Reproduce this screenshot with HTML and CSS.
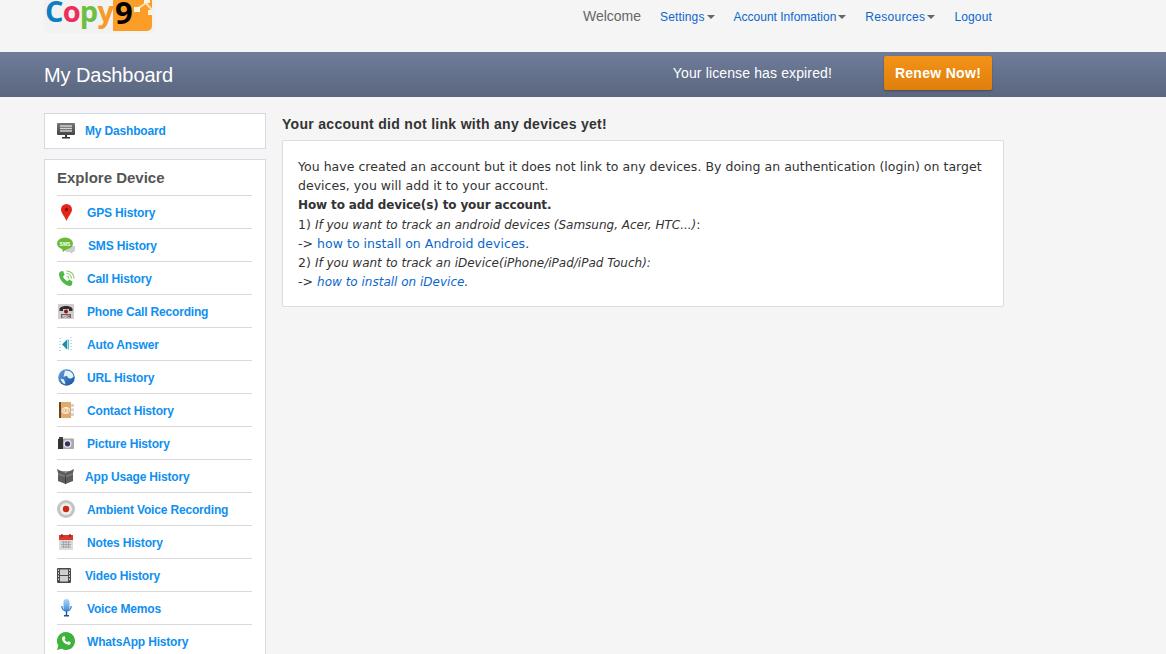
FILE: index.html
```html
<!DOCTYPE html>
<html lang="en">
<head>
<meta charset="utf-8">
<title>My Dashboard</title>
<link rel="stylesheet" href="styles.css">
</head>
<body>
<div class="page">
<header class="topbar">
  <div class="logo"><span class="word"><span class="lc">C</span><span class="lo">o</span><span class="lp">p</span><span class="ly">y</span></span><span class="nine"><svg class="nine-art" viewBox="0 0 39 31" width="39" height="31"><path d="M0 0h39v26a5 5 0 0 1-5 5H0z" fill="#fb9d27"/><path d="M24 9l9-6 6 7" fill="none" stroke="#fbe6c8" stroke-width="2"/><rect x="21" y="7" width="6" height="5" fill="#fdf3e3"/><rect x="35" y="10" width="4" height="5" fill="#f8f3ea"/><rect x="31" y="0" width="6" height="3" fill="#fdf3e3"/></svg>9</span></div>
  <nav class="nav">
    <span class="welcome">Welcome</span>
    <a class="nav-link caret">Settings</a>
    <a class="nav-link caret nav-tight">Account Infomation</a>
    <a class="nav-link caret nav-wide">Resources</a>
    <a class="nav-link">Logout</a>
  </nav>
</header>
<section class="banner">
  <h1 class="banner-title">My Dashboard</h1>
  <span class="license">Your license has expired!</span>
  <a class="renew">Renew Now!</a>
</section>
<main class="main">
  <aside class="side">
    <div class="card dash-card">
      <svg class="ic" viewBox="0 0 18 16" width="18" height="16"><defs><linearGradient id="mon" x1="0" y1="0" x2="0" y2="1"><stop offset="0" stop-color="#777"/><stop offset="1" stop-color="#444"/></linearGradient></defs><rect x="0" y="0" width="18" height="12" rx="1" fill="url(#mon)"/><path d="M3 3h12M3 5.500h12M3 8h12" stroke="#d4d4d4" stroke-width="1.500"/><path d="M8 12h2v2H8zM5 14h8v1.500H5z" fill="#333"/></svg>
      <a class="side-link dash-link">My Dashboard</a>
    </div>
    <div class="card explore">
      <h2 class="explore-title">Explore Device</h2>
      <ul class="menu">
        <li class="row"><span class="slot p4 w30"><svg viewBox="0 0 11 17" width="11" height="17"><path d="M5.500 0A5.500 5.500 0 0 0 0 5.500C0 9 3.500 12 5.500 17 7.500 12 11 9 11 5.500A5.500 5.500 0 0 0 5.500 0z" fill="#e3261a"/><circle cx="5.500" cy="5.500" r="1.800" fill="#8c140c"/></svg></span><a class="side-link">GPS History</a></li>
        <li class="row"><span class="slot p0 w31"><svg viewBox="0 0 18 17" width="18" height="17"><path d="M8 9h10v4l-1 2h-2l1 2-4-2H9z" fill="#cfcfcf"/><ellipse cx="8" cy="6.500" rx="8" ry="6" fill="#69bb35"/><path d="M5 11l1 4 4-3z" fill="#69bb35"/><text x="8" y="8.500" class="sms-text">SMS</text></svg></span><a class="side-link">SMS History</a></li>
        <li class="row"><span class="slot p1 w30"><svg viewBox="0 0 17 17" width="17" height="17"><path d="M2.500 1.500 5 1l1.700 3.800L5 6.500c.8 2 2.300 3.600 4.500 4.700l1.700-1.700 3.300 2-.5 3c-.5 1-1.500 1.700-2.500 1.500C6 15 1.500 10 1 4.500 1 3 1.500 2 2.500 1.500z" fill="#4fb948"/><path d="M8.500 6a2.800 2.800 0 0 1 2.500 2.500M8.500 3.500a5.300 5.300 0 0 1 5 5M8.500 1a7.800 7.800 0 0 1 7.700 7.500" fill="none" stroke="#7ccb62" stroke-width="1.100"/></svg></span><a class="side-link">Call History</a></li>
        <li class="row"><span class="slot p1 w30"><svg viewBox="0 0 16 15" width="16" height="15"><rect width="16" height="15" fill="#d2cccc"/><path d="M1.500 5C2 1 14 1 14.500 5V7H11V5H5V7H1.500z" fill="#2e2e2e"/><circle cx="8" cy="7.500" r="2" fill="#8c1a1a"/><rect x="3" y="10" width="10" height="4" fill="#6d6060"/><text x="8" y="13.500" class="rec-text">REC</text></svg></span><a class="side-link">Phone Call Recording</a></li>
        <li class="row"><span class="slot p2 w30"><svg viewBox="0 0 13 15" width="13" height="15"><path d="M0 1h2v1H0zM0 4h2v1H0zM0 7h2v1H0zM0 10h2v1H0zM0 13h2v1H0zM11 0h2v1h-2zM11 3h2v1h-2zM11 6h2v1h-2zM11 9h2v1h-2zM11 12h2v1h-2z" fill="#b5e0e8"/><path d="M3 7.500 8 2.500v10z" fill="#1f8fa8"/><path d="M8.500 2.500h1.500v10H8.500z" fill="#68bccd"/></svg></span><a class="side-link">Auto Answer</a></li>
        <li class="row"><span class="slot p1 w30"><svg viewBox="0 0 17 17" width="17" height="17"><defs><linearGradient id="globe" x1="0" y1="0" x2="1" y2="1"><stop offset="0" stop-color="#5fa5e0"/><stop offset="1" stop-color="#154d9a"/></linearGradient></defs><circle cx="8.500" cy="8.500" r="8.300" fill="url(#globe)"/><path d="M7 1.500c3 .5 4 0 6 1.500 2 1.500 2.500 3.500 2.500 5l-3 1.800-2.500-1-1-2-3.500 1zM2.500 9.500l3.500 1 1.500 4.500c-2.500 0-4.500-3-5-5.500z" fill="#e6f2fa"/></svg></span><a class="side-link">URL History</a></li>
        <li class="row"><span class="slot p2 w30"><svg viewBox="0 0 15 16" width="15" height="16"><rect x="0" y="0" width="12" height="16" fill="#dfaa6d"/><rect x="0" y="0" width="2" height="16" fill="#6f4219"/><path d="M12 2h3v3h-3zM12 6.500h3v3h-3zM12 11h3v3h-3z" fill="#d5d5d5"/><text x="7" y="11" class="at-text">@</text></svg></span><a class="side-link">Contact History</a></li>
        <li class="row"><span class="slot p1 w30"><svg viewBox="0 0 16 12" width="16" height="12"><rect y="1.500" width="16" height="10.500" rx="1" fill="#a9a9a9"/><rect x="1" y="0" width="4" height="3" fill="#444"/><rect y="2" width="5" height="10" fill="#333"/><circle cx="9.500" cy="6.800" r="4" fill="#e4e4e4"/><circle cx="9.500" cy="6.800" r="2.600" fill="#33306a"/></svg></span><a class="side-link">Picture History</a></li>
        <li class="row"><span class="slot p0 w28"><svg viewBox="0 0 17 16" width="17" height="16"><path d="M0 1l4 2h9l4-2-1 4v8l-7.500 3L1 13V5z" fill="#5d5d5d"/><path d="M1 1.500 8.500 5 16 1.500 13 3H4z" fill="#999"/><path d="M1 5l7.500 3L16 5v1.500l-7.500 3L1 6.500z" fill="#808080"/><path d="M8.500 8v8" stroke="#3c3c3c"/></svg></span><a class="side-link">App Usage History</a></li>
        <li class="row"><span class="slot p0 w30"><svg viewBox="0 0 18 18" width="18" height="18"><circle cx="9" cy="9" r="9" fill="#c4c4c4"/><circle cx="9" cy="9" r="6" fill="#f0eeee"/><circle cx="9" cy="9" r="3.200" fill="#cd2a12"/></svg></span><a class="side-link">Ambient Voice Recording</a></li>
        <li class="row"><span class="slot p2 w30"><svg viewBox="0 0 14 16" width="14" height="16"><rect y="1" width="14" height="15" fill="#dcdcdc"/><rect y="1" width="14" height="5" fill="#d9392c"/><path d="M3 0v3M11 0v3" stroke="#7d1c14" stroke-width="1.200"/><path d="M2 8h10M2 10.500h10M2 13h10M4.500 7v7M7 7v7M9.500 7v7" stroke="#a5a5a5"/></svg></span><a class="side-link">Notes History</a></li>
        <li class="row"><span class="slot p0 w28"><svg viewBox="0 0 14 15" width="14" height="15"><rect width="14" height="15" rx="1" fill="#4a4a4a"/><path d="M1 1.500h1v1.500H1zM1 4.500h1V6H1zM1 7.500h1V9H1zM1 10.500h1V12H1zM12 1.500h1v1.500h-1zM12 4.500h1V6h-1zM12 7.500h1V9h-1zM12 10.500h1V12h-1z" fill="#ddd"/><rect x="3" y="1.500" width="8" height="5.500" fill="#cfcfcf"/><rect x="3" y="8" width="8" height="5.500" fill="#cfcfcf"/></svg></span><a class="side-link">Video History</a></li>
        <li class="row"><span class="slot p4 w30"><svg viewBox="0 0 11 18" width="11" height="18"><defs><linearGradient id="mic" x1="0" y1="0" x2="0" y2="1"><stop offset="0" stop-color="#a9d6f8"/><stop offset="1" stop-color="#3f8fe0"/></linearGradient></defs><rect x="2.500" y="0" width="6" height="12" rx="3" fill="url(#mic)"/><path d="M.8 7c0 6.500 9.400 6.500 9.400 0" fill="none" stroke="#3578c4" stroke-width="1.300"/><path d="M4.800 12h1.400v4H4.800zM3 16h5v1.500H3z" fill="#264f9c"/></svg></span><a class="side-link">Voice Memos</a></li>
        <li class="row"><span class="slot p0 w30"><svg viewBox="0 0 18 18" width="18" height="18"><path d="M9 0a9 9 0 0 0-7.700 13.600L0 18l4.500-1.200A9 9 0 1 0 9 0z" fill="#3fb23c"/><path d="M6 4.500 7.500 4l1 2.500-1 1c.6 1.200 1.500 2.100 2.800 2.800l1-1 2.400 1-.4 1.600c-.4.800-1.300 1-2.100.8C7.800 12 5.600 9.800 5 7c-.1-1 .3-2 1-2.500z" fill="#fff"/></svg></span><a class="side-link">WhatsApp History</a></li>
      </ul>
    </div>
  </aside>
  <section class="content">
    <h3 class="content-title">Your account did not link with any devices yet!</h3>
    <div class="notice">
      You have created an account but it does not link to any devices. By doing an authentication (login) on target devices, you will add it to your account.<br>
      <strong>How to add device(s) to your account.</strong><br>
      1) <em>If you want to track an android devices (Samsung, Acer, HTC...)</em>:<br>
      -&gt; <a class="txt-link">how to install on Android devices</a>.<br>
      2) <em>If you want to track an iDevice(iPhone/iPad/iPad Touch):</em><br>
      -&gt; <em><a class="txt-link">how to install on iDevice</a>.</em>
    </div>
  </section>
</main>
</div>
</body>
</html>
```
FILE: styles.css
```css
* { box-sizing: border-box; }
html, body { margin: 0; padding: 0; overflow: hidden; }
body { background: #f5f5f5; font-family: "Liberation Sans", Arial, sans-serif; color: #333; }
.page { height: 654px; overflow: hidden; }

.topbar { height: 52px; display: flex; justify-content: space-between; padding: 0 174px 0 44px; overflow: hidden; }
.logo { width: 111px; height: 33px; display: flex; background: #f2f2f2; overflow: hidden; font-family: "Open Sans", sans-serif; }
.word { width: 69px; flex: none; padding-left: 1px; font-size: 29px; font-weight: 700; line-height: 22px; letter-spacing: -.8px; }
.lc { color: #0f7dc2; }
.lo { color: #ee2d5c; }
.lp { color: #6cbf45; }
.ly { color: #f79a26; }
.nine { position: relative; width: 39px; height: 31px; padding-left: 2px; z-index: 0; color: #000; font-size: 31px; font-weight: 700; line-height: 24px; }
.nine-art { position: absolute; left: 0; top: 0; z-index: -1; }

.nav { display: flex; align-items: baseline; padding-top: 8px; font-size: 12px; }
.welcome { font-size: 14px; color: #666; margin-right: 19px; }
.nav-link { color: #0b67cd; margin-right: 19px; letter-spacing: .15px; }
.nav-link:last-child { margin-right: 0; }
.nav-tight { letter-spacing: 0; }
.nav-wide { letter-spacing: .3px; }
.caret { display: inline-flex; align-items: center; }
.caret::after { content: ""; margin-left: 2px; border-left: 4px solid transparent; border-right: 4px solid transparent; border-top: 4px solid #666; }

.banner { height: 45px; display: flex; align-items: center; padding: 0 174px 0 44px; background: linear-gradient(#707d98, #5a6680); color: #fff; }
.banner-title { margin: 2px 0 0; flex: 1; font-size: 20px; font-weight: 400; letter-spacing: -.08px; }
.license { font-size: 14px; margin-right: 52px; margin-top: -3px; letter-spacing: .13px; }
.renew { width: 108px; height: 34px; margin-top: -3px; display: flex; align-items: center; justify-content: center; border-radius: 2px; background: linear-gradient(#f39317, #e07f0b); box-shadow: 0 1px 2px rgba(0,0,0,.3); font-size: 14px; font-weight: 700; letter-spacing: .3px; }

.main { display: flex; gap: 16px; padding: 16px 0 0 44px; }
.side { width: 222px; flex: none; }
.card { background: #fff; border: 1px solid #d4dae3; }
.dash-card { height: 36px; display: flex; align-items: center; padding-left: 12px; gap: 10px; margin-bottom: 10px; }
.side-link { color: #108ff0; font-size: 12px; font-weight: 700; letter-spacing: -.17px; }
.explore { padding: 0 13px 0 12px; }
.explore-title { margin: 0; height: 35px; line-height: 36px; font-size: 15px; font-weight: 700; color: #555; }
.menu { list-style: none; margin: 0; padding: 0; }
.row { height: 33px; display: flex; align-items: center; border-top: 1px solid #d9d9d9; }
.row .side-link { padding-top: 2px; }
.slot { display: flex; align-items: center; flex: none; }
.slot svg { display: block; }
.w28 { width: 28px; }
.w30 { width: 30px; }
.w31 { width: 31px; }
.p0 { padding-left: 0; }
.p1 { padding-left: 1px; }
.p2 { padding-left: 2px; }
.p4 { padding-left: 4px; }
.sms-text { font: 700 5px "Liberation Sans", sans-serif; fill: #fff; text-anchor: middle; }
.rec-text { font: 700 3.500px "Liberation Sans", sans-serif; fill: #eee; text-anchor: middle; }
.at-text { font: 700 9px "Liberation Sans", sans-serif; fill: #fff; text-anchor: middle; }

.content { width: 722px; flex: none; }
.content-title { margin: 2px 0 7px; font-size: 14px; line-height: 18px; font-weight: 700; color: #333; letter-spacing: .3px; }
.notice { height: 167px; padding: 16px 15px; background: #fff; border: 1px solid #ddd; border-radius: 2px; font-family: "DejaVu Sans", Verdana, sans-serif; font-size: 12.5px; line-height: 19.2px; letter-spacing: .03px; color: #333; }
.notice strong { font-size: 12px; line-height: 1; font-weight: 700; letter-spacing: -.13px; }
.notice em { font-size: 12px; line-height: 1; letter-spacing: 0; }
.txt-link { color: #0b67cd; }
```
